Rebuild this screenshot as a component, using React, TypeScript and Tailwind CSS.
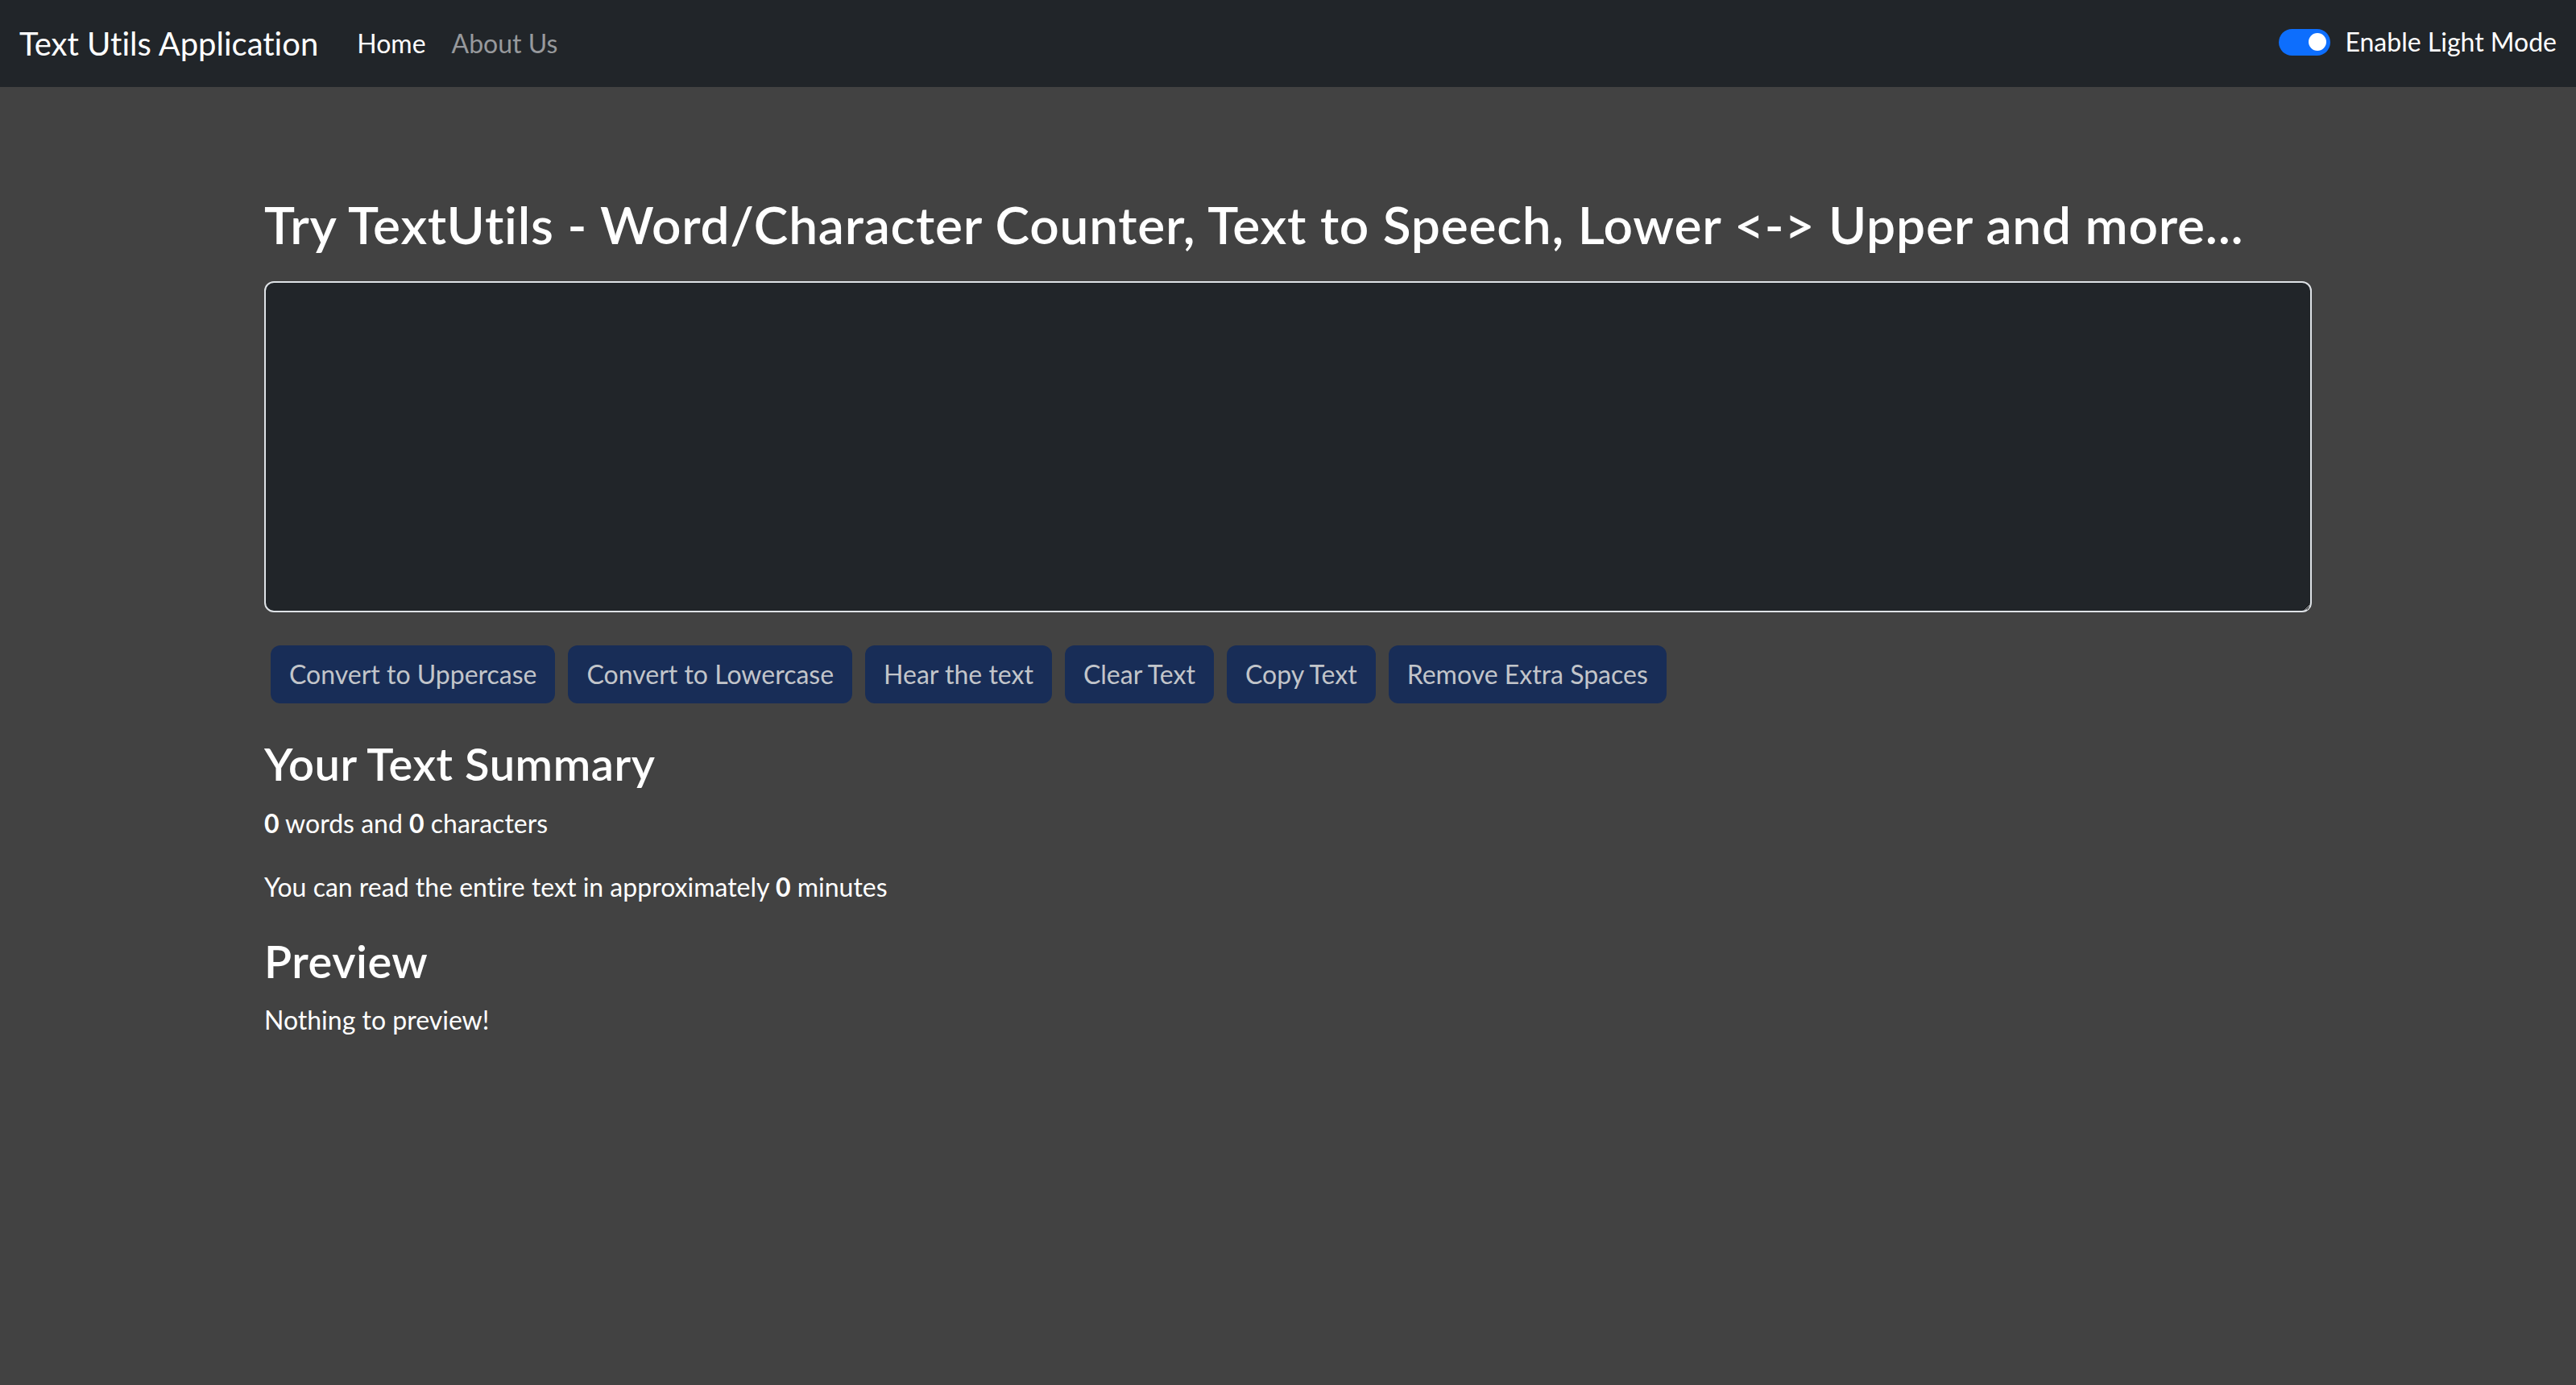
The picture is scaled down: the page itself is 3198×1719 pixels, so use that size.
import React from "react";

const font = { fontFamily: "Lato, 'Open Sans', sans-serif" };

export default function App() {
  const buttons = [
    "Convert to Uppercase",
    "Convert to Lowercase",
    "Hear the text",
    "Clear Text",
    "Copy Text",
    "Remove Extra Spaces",
  ];
  return (
    <div className="min-h-screen bg-[#424242] text-white font-['Lato',sans-serif] [font-variant-ligatures:none]">
      <nav className="h-[108px] bg-[#212529] flex items-center justify-between px-[24px]">
        <div className="flex items-center">
          <span className="text-[40px] leading-[60px] text-white mr-[32px]">Text Utils Application</span>
          <a className="text-[32px] leading-[48px] text-white px-[16px]">Home</a>
          <a className="text-[32px] leading-[48px] text-[#97999c] px-[16px]">About Us</a>
        </div>
        <div className="flex items-center gap-[18px] -mt-[4px]">
          <div className="w-[64px] h-[33px] rounded-full bg-[#0d6efd] flex items-center justify-end pr-[5px]">
            <div className="w-[22px] h-[22px] rounded-full bg-white" />
          </div>
          <span className="text-[32px] leading-[48px] text-white">Enable Light Mode</span>
        </div>
      </nav>
      <main className="w-[2542px] mx-auto pt-[133px]">
        <h1 className="text-[64px] leading-[76.8px] font-semibold tracking-[0.012em] text-white">
          Try TextUtils - Word/Character Counter, Text to Speech, Lower &lt;-&gt; Upper and more...
        </h1>
        <textarea
          className="block mt-[31px] w-full h-[411px] rounded-[12px] border-2 border-[#dee2e6] bg-[#212529] text-white outline-none"
          style={font}
        />
        <div className="flex mt-[41px]">
          {buttons.map((b) => (
            <button
              key={b}
              className="h-[72px] px-[23px] mx-[8px] rounded-[12px] bg-[#182d57] text-[#c2c5ca] text-[32px] leading-[48px]"
            >
              {b}
            </button>
          ))}
        </div>
        <h2 className="mt-[41px] text-[56px] leading-[67.2px] font-semibold tracking-[0.01em] text-white">Your Text Summary</h2>
        <p className="mt-[17px] text-[32px] leading-[48px]">
          <b>0</b> words and <b>0</b> characters
        </p>
        <p className="mt-[31px] text-[32px] leading-[48px]">
          You can read the entire text in approximately <b>0</b> minutes
        </p>
        <h2 className="mt-[34px] text-[56px] leading-[67.2px] font-semibold tracking-[0.01em] text-white">Preview</h2>
        <p className="mt-[16px] text-[32px] leading-[48px]">Nothing to preview!</p>
      </main>
    </div>
  );
}
